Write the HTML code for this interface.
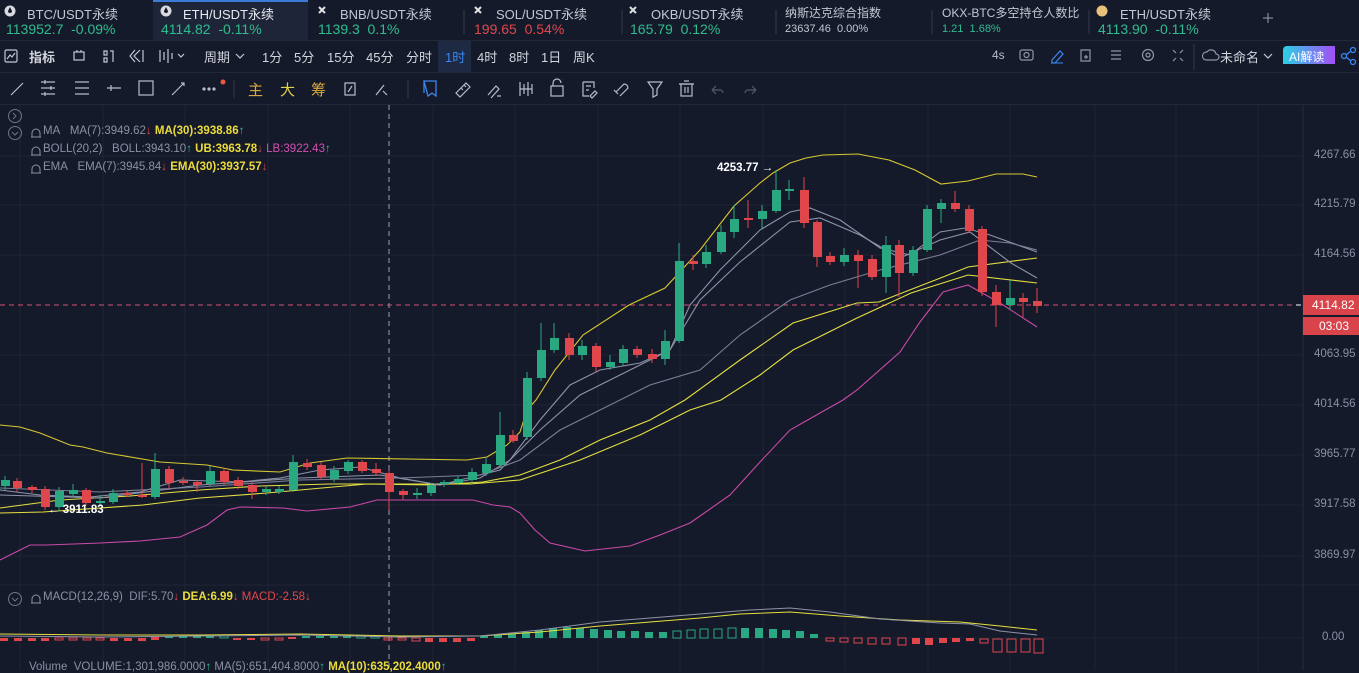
<!DOCTYPE html>
<html><head><meta charset="utf-8"><style>
*{margin:0;padding:0;box-sizing:border-box}
body{width:1359px;height:670px;background:#151a2b;overflow:hidden;font-family:"Liberation Sans","Noto Sans CJK SC",sans-serif;color:#c7cad4;position:relative}
.a{position:absolute;white-space:nowrap}
.tn{font-size:13px;color:#c4c7d1;top:4px}
.tp{font-size:14px;color:#2ebd8e;top:21px}
.tb{font-size:13px;color:#d3d5dc;top:47px}
.g{color:#2ebd8e}.r{color:#e0474c}.y{color:#ecdc3a}.m{color:#d34fb0}
.lg{font-size:11.5px;color:#8b90a2}
.ax{font-size:11.5px;color:#8b90a2;left:1314px}
</style></head><body>
<div class="a" style="left:153px;top:0;width:155px;height:40px;background:#1f2538;border-top:2px solid #3a7bd5"></div>
<div class="a" style="left:0;top:40px;width:1359px;height:1px;background:#232839"></div>
<div class="a" style="left:0;top:72px;width:1359px;height:1px;background:#232839"></div>
<div class="a" style="left:0;top:104px;width:1359px;height:1px;background:#232839"></div>
<svg class="a" style="left:0;top:0" width="1359" height="104">
<g fill="#d8dae0"><circle cx="10" cy="11" r="5.5"/><circle cx="166" cy="11" r="5.5"/></g>
<g fill="#151a2b"><path d="M10 7 l-2 4 a2 2 0 0 0 4 0z"/><path d="M166 7 l-2 4 a2 2 0 0 0 4 0z"/></g>
<g stroke="#e0e0e0" stroke-width="2"><path d="M319 7l6 6M325 7l-6 6M475 7l6 6M481 7l-6 6M630 7l6 6M636 7l-6 6"/></g>
<circle cx="1102" cy="11" r="5.5" fill="#e8c27a"/>
<g stroke="#333a4e"><path d="M464 10v24M622 10v24M776 10v24M932 10v24M1089 10v24"/></g>
<path d="M1268 13v10M1263 18h10" stroke="#9aa0b0"/>
<g stroke="#c4c7d1" fill="none" stroke-width="1.2">
<rect x="5" y="50" width="12" height="12" rx="1.5"/><path d="M7 59l3-4 2 2 3-4"/>
<rect x="74" y="52" width="10" height="8"/><path d="M77 50v2M81 50v2"/>
<path d="M104 51h3v4h-3zM104 58h3v4h-3zM110 51h3v11"/>
<path d="M140 50l-6 6 6 6M135 50l-5 6 5 6M143 50v12"/>
<path d="M160 50v12M164 52v8M168 49v14M172 53v6M178 54l3 3 3-3"/>
<path d="M236 54l4 4 4-4"/>
<path d="M1264 54l4 4 4-4"/>
</g>
<rect x="438" y="41" width="33" height="31" fill="#1e2a44"/>
<g stroke="#8f95a6" fill="none" stroke-width="1.2">
<rect x="1020" y="50" width="13" height="10" rx="2"/><circle cx="1026.5" cy="55" r="2.5"/>
<path d="M1081 50h9v11h-9zM1084 57h4M1086 55v4"/>
<path d="M1111 51h10M1111 55h10M1111 59h10"/>
<circle cx="1148" cy="55" r="5.5"/><circle cx="1148" cy="55" r="2"/>
<path d="M1173 50l3 3M1183 50l-3 3M1173 61l3-3M1183 61l-3-3"/>
<path d="M1206 60a4 4 0 0 1 1-8a5 5 0 0 1 9 2a3 3 0 0 1 0 6z"/>
</g>
<path d="M1052 60l8-9 3 3-8 9h-3z" stroke="#3a86f0" fill="none" stroke-width="1.2"/>
<path d="M1051 63h12" stroke="#3a86f0"/>
<path d="M1194 44v26" stroke="#333a4e"/>
<defs><linearGradient id="ai" x1="0" x2="1"><stop offset="0" stop-color="#2ad0e6"/><stop offset="1" stop-color="#a44ef5"/></linearGradient></defs>
<path d="M1287 46h48v18h-52v-14a4 4 0 0 1 4-4z" fill="url(#ai)"/>
<g stroke="#3a86f0" fill="none" stroke-width="1.3"><circle cx="1344" cy="56" r="2.5"/><circle cx="1353" cy="50" r="2.5"/><circle cx="1353" cy="62" r="2.5"/><path d="M1346 55l5-4M1346 57l5 4"/></g>
<g stroke="#b8bcc8" fill="none" stroke-width="1.2">
<path d="M11 95l12-12"/>
<path d="M41 82h14M41 88h14M41 94h14M45 80v4M51 86v4M45 92v4"/>
<path d="M75 82h14M75 88h14M75 94h14"/>
<path d="M107 88h14M111 85v6"/>
<rect x="139" y="81" width="14" height="14"/>
<path d="M172 95l12-12M181 83h3v3"/>
<circle cx="204" cy="89" r="1" fill="#b8bcc8"/><circle cx="209" cy="89" r="1" fill="#b8bcc8"/><circle cx="214" cy="89" r="1" fill="#b8bcc8"/>
<path d="M345 83h10v12h-10zM348 92l4-6"/>
<path d="M376 95l8-10M383 91l4 4"/>
</g>
<circle cx="223" cy="82" r="2.5" fill="#ef5a3c"/>
<path d="M234 80v18M408 80v18" stroke="#333a4e"/>
<g stroke="#3a86f0" fill="none" stroke-width="1.3"><path d="M424 81h12v15l-4-3-4 3zM424 81v12"/></g>
<g stroke="#b8bcc8" fill="none" stroke-width="1.2">
<path d="M456 93l10-10 4 4-10 10zM461 88l2 2M464 85l2 2"/>
<path d="M488 95l8-9 3 3-8 9M497 96h4"/>
<path d="M520 82v14M524 84v10M528 82v14M532 84v10M520 89h12"/>
<rect x="551" y="86" width="12" height="10"/><path d="M553 86v-3a4 4 0 0 1 8 0"/>
<path d="M583 82h11v6M583 82v14h6M586 86h5M586 90h3M590 96l5-5 2 2-5 5z"/>
<path d="M616 92l8-8a4 4 0 0 1 4 4l-8 8M614 90l4 4"/>
<path d="M648 82h14l-5 7v6l-4 2v-8z"/>
<rect x="681" y="84" width="11" height="12"/><path d="M679 84h15M684 81h5M685 87v6M688 87v6"/>
</g>
<g stroke="#545a6c" fill="none" stroke-width="1.2"><path d="M712 90l4-4M712 90l4 4M712 90h8a3 3 0 0 1 3 3M756 90l-4-4M756 90l-4 4M756 90h-8a3 3 0 0 0-3 3"/></g>
</svg>
<div class="a tn" style="left:27px">BTC/USDT永续</div><div class="a tp" style="left:6px">113952.7&nbsp; -0.09%</div>
<div class="a tn" style="left:183px;color:#e6e8ee">ETH/USDT永续</div><div class="a tp" style="left:161px">4114.82&nbsp; -0.11%</div>
<div class="a tn" style="left:340px">BNB/USDT永续</div><div class="a tp" style="left:318px">1139.3&nbsp; 0.1%</div>
<div class="a tn" style="left:496px">SOL/USDT永续</div><div class="a tp r" style="left:474px">199.65&nbsp; 0.54%</div>
<div class="a tn" style="left:651px">OKB/USDT永续</div><div class="a tp" style="left:630px">165.79&nbsp; 0.12%</div>
<div class="a" style="left:785px;top:4px;font-size:12px;color:#c4c7d1">纳斯达克综合指数</div><div class="a" style="left:785px;top:23px;font-size:11px;color:#c4c7d1">23637.46&nbsp; 0.00%</div>
<div class="a" style="left:942px;top:4px;font-size:12px;color:#c4c7d1">OKX-BTC多空持仓人数比</div><div class="a" style="left:942px;top:23px;font-size:11px;color:#2ebd8e">1.21&nbsp; 1.68%</div>
<div class="a tn" style="left:1120px">ETH/USDT永续</div><div class="a tp" style="left:1098px">4113.90&nbsp; -0.11%</div>
<div class="a tb" style="left:29px;font-weight:bold">指标</div>
<div class="a tb" style="left:204px">周期</div>
<div class="a tb" style="left:262px">1分</div><div class="a tb" style="left:294px">5分</div><div class="a tb" style="left:327px">15分</div><div class="a tb" style="left:366px">45分</div><div class="a tb" style="left:406px">分时</div><div class="a tb" style="left:445px;color:#3a86f0">1时</div><div class="a tb" style="left:477px">4时</div><div class="a tb" style="left:509px">8时</div><div class="a tb" style="left:541px">1日</div><div class="a tb" style="left:573px">周K</div>
<div class="a tb" style="left:992px;color:#b8bcc8;font-size:12px;top:48px">4s</div>
<div class="a tb" style="left:1220px">未命名</div>
<div class="a" style="left:1289px;top:48px;font-size:12px;color:#fff">AI解读</div>
<div class="a" style="left:248px;top:79px;font-size:15px;color:#d9a83a">主</div>
<div class="a" style="left:280px;top:79px;font-size:15px;color:#e0d04a">大</div>
<div class="a" style="left:311px;top:79px;font-size:15px;color:#d9a83a">筹</div>
<svg class="a" style="left:0;top:105px" width="1359" height="565" viewBox="0 105 1359 565">
<g stroke="#1f2436" stroke-width="1">
<path d="M20 105v565M103 105v565M185 105v565M268 105v565M350 105v565M433 105v565M515 105v565M598 105v565M680 105v565M763 105v565M845 105v565M928 105v565M1010 105v565M1095 105v565M1176 105v565M1258 105v565"/>
<path d="M0 156h1303M0 205h1303M0 255h1303M0 355h1303M0 405h1303M0 455h1303M0 505h1303M0 556h1303M0 585h1359M0 638h1303"/>
</g>
<path d="M1303 105v565" stroke="#262b3c"/>
<path d="M389 105v565" stroke="#9aa0b0" stroke-dasharray="5 4" stroke-width="1"/>
<path d="M0 305h1303" stroke="#d9507a" stroke-dasharray="5 4"/>
<g fill="none" stroke-width="1.1">
<polyline stroke="#d8c830" points="0,425 20,427 40,433 70,445 83,447 107,453 160,462 207,465 233,470 280,472 310,463 347,458 467,460 487,457 507,445 520,432 527,410 536,400 555,370 583,335 629,305 665,288 700,250 734,206 760,183 773,173 790,163 806,158 823,155 858,154 889,160 915,170 941,184 968,181 996,174 1023,174 1037,177"/>
<polyline stroke="#c94aa6" points="0,560 30,545 47,545 100,543 140,541 180,537 207,525 227,510 240,507 283,508 307,511 350,507 377,500 473,500 493,505 510,507 520,513 535,530 550,543 585,551 630,546 660,535 690,523 730,495 760,462 790,430 820,413 843,400 857,390 900,352 920,322 943,292 968,285 1000,303 1037,327"/>
<polyline stroke="#e5e040" points="0,513 43,512 143,505 200,498 267,493 333,487 367,484 433,485 483,482 520,475 560,460 600,440 650,420 685,400 740,360 793,323 857,303 879,302 943,277 968,267 1037,258"/>
<polyline stroke="#e5e040" points="0,508 60,500 130,496 200,490 260,486 330,484 400,484 470,484 520,480 580,460 640,435 690,410 721,400 760,375 793,350 857,318 911,293 968,275 1037,283"/>
<polyline stroke="#8e93a8" points="0,490 40,495 90,497 140,492 180,480 240,482 280,478 320,470 360,467 400,478 440,485 480,478 510,460 540,420 570,385 600,370 640,363 670,350 690,305 720,270 760,230 790,212 810,208 840,220 880,248 910,255 940,232 965,228 990,235 1037,252"/>
<polyline stroke="#8e93a8" points="0,495 100,498 200,485 300,478 380,475 440,485 500,470 540,430 580,395 620,375 670,350 700,300 740,262 790,222 820,218 860,235 900,258 940,240 970,232 1011,263 1037,278"/>
<polyline stroke="#7a7f94" points="0,488 100,492 200,487 300,480 400,478 480,475 520,460 560,430 600,410 650,385 700,370 740,335 790,300 830,285 880,270 940,255 980,240 1010,243 1037,250"/>
</g>
<g stroke="#2aa882" stroke-width="1">
<path d="M5 476v14M59 487v24M73 484v13M100 495v11M113 489v15M155 453v46M210 466v20M266 486v9M279 486v8M293 455v37M334 466v16M348 460v14M417 488v11M431 483v13M444 480v7M458 476v9M472 468v15M486 458v18M500 412v55M527 372v68M541 323v58M554 323v30M582 340v20M610 355v15M623 345v21M665 330v35M679 243v100M706 245v23M721 225v29M734 205v33M762 205v23M776 170v43M789 180v20M844 248v18M886 236v57M913 246v30M927 205v47M941 199v24M1010 280v30"/>
</g>
<g fill="#2aa882">
<rect x="1" y="480" width="9" height="6"/><rect x="55" y="491" width="9" height="16"/><rect x="69" y="490" width="9" height="4"/><rect x="96" y="501" width="9" height="2"/><rect x="109" y="493" width="9" height="9"/><rect x="151" y="469" width="9" height="28"/><rect x="206" y="471" width="9" height="13"/><rect x="262" y="489" width="9" height="3"/><rect x="275" y="489" width="9" height="3"/><rect x="289" y="462" width="9" height="28"/><rect x="330" y="470" width="9" height="9"/><rect x="344" y="462" width="9" height="9"/><rect x="413" y="493" width="9" height="2"/><rect x="427" y="485" width="9" height="8"/><rect x="440" y="482" width="9" height="2"/><rect x="454" y="479" width="9" height="4"/><rect x="468" y="472" width="9" height="8"/><rect x="482" y="464" width="9" height="9"/><rect x="496" y="435" width="9" height="30"/><rect x="523" y="378" width="9" height="59"/><rect x="537" y="350" width="9" height="28"/><rect x="550" y="338" width="9" height="12"/><rect x="578" y="346" width="9" height="9"/><rect x="606" y="362" width="9" height="5"/><rect x="619" y="349" width="9" height="14"/><rect x="661" y="341" width="9" height="18"/><rect x="675" y="261" width="9" height="80"/><rect x="702" y="252" width="9" height="12"/><rect x="717" y="232" width="9" height="20"/><rect x="730" y="219" width="9" height="13"/><rect x="758" y="211" width="9" height="8"/><rect x="772" y="190" width="9" height="21"/><rect x="785" y="189" width="9" height="2"/><rect x="840" y="255" width="9" height="7"/><rect x="882" y="245" width="9" height="32"/><rect x="909" y="250" width="9" height="23"/><rect x="923" y="209" width="9" height="41"/><rect x="937" y="203" width="9" height="6"/><rect x="1006" y="298" width="9" height="7"/>
</g>
<g stroke="#e0474c" stroke-width="1">
<path d="M17 478v14M32 485v8M45 486v24M86 488v18M127 490v7M142 463v35M169 466v24M183 477v8M197 480v12M224 468v17M238 477v12M252 482v17M307 459v11M321 462v18M362 460v13M376 463v13M389 470v40M403 489v11M513 430v13M569 333v27M596 343v29M637 346v12M652 349v14M693 255v15M748 200v28M804 177v51M817 220v47M830 252v13M858 250v38M872 255v25M899 240v57M955 191v21M969 205v28M982 226v70M996 285v42M1023 293v24M1037 288v25"/>
</g>
<g fill="#e0474c">
<rect x="13" y="481" width="9" height="7"/><rect x="28" y="487" width="9" height="3"/><rect x="41" y="489" width="9" height="18"/><rect x="82" y="490" width="9" height="13"/><rect x="123" y="493" width="9" height="2"/><rect x="138" y="495" width="9" height="2"/><rect x="165" y="469" width="9" height="14"/><rect x="179" y="481" width="9" height="2"/><rect x="193" y="482" width="9" height="3"/><rect x="220" y="471" width="9" height="11"/><rect x="234" y="480" width="9" height="6"/><rect x="248" y="485" width="9" height="7"/><rect x="303" y="463" width="9" height="4"/><rect x="317" y="465" width="9" height="12"/><rect x="358" y="462" width="9" height="9"/><rect x="372" y="469" width="9" height="4"/><rect x="385" y="473" width="9" height="19"/><rect x="399" y="491" width="9" height="4"/><rect x="509" y="435" width="9" height="6"/><rect x="565" y="338" width="9" height="17"/><rect x="592" y="346" width="9" height="21"/><rect x="633" y="349" width="9" height="6"/><rect x="648" y="354" width="9" height="5"/><rect x="689" y="261" width="9" height="3"/><rect x="744" y="218" width="9" height="2"/><rect x="800" y="190" width="9" height="33"/><rect x="813" y="222" width="9" height="35"/><rect x="826" y="256" width="9" height="6"/><rect x="854" y="255" width="9" height="6"/><rect x="868" y="259" width="9" height="18"/><rect x="895" y="245" width="9" height="28"/><rect x="951" y="203" width="9" height="6"/><rect x="965" y="209" width="9" height="22"/><rect x="978" y="229" width="9" height="63"/><rect x="992" y="292" width="9" height="13"/><rect x="1019" y="298" width="9" height="4"/><rect x="1033" y="301" width="9" height="5"/>
</g>
<g fill="#e0474c"><rect x="0" y="638" width="8" height="3"/><rect x="14" y="638" width="8" height="3"/><rect x="28" y="638" width="8" height="3"/><rect x="41" y="638" width="8" height="3"/><rect x="110" y="638" width="8" height="3"/><rect x="124" y="638" width="8" height="3"/><rect x="138" y="638" width="8" height="3"/><rect x="151" y="637" width="8" height="3"/><rect x="233" y="638" width="8" height="2"/><rect x="247" y="638" width="8" height="2"/><rect x="288" y="637" width="8" height="2"/><rect x="425" y="638" width="8" height="4"/><rect x="439" y="638" width="8" height="4"/><rect x="453" y="638" width="8" height="4"/><rect x="467" y="638" width="8" height="3"/><rect x="912" y="638" width="8" height="6"/><rect x="925" y="638" width="8" height="7"/><rect x="939" y="638" width="8" height="5"/><rect x="952" y="638" width="8" height="4"/><rect x="966" y="638" width="8" height="3"/></g>
<g fill="none" stroke="#e0474c"><rect x="55" y="638" width="8" height="2"/><rect x="69" y="638" width="8" height="2"/><rect x="83" y="638" width="8" height="2"/><rect x="96" y="638" width="8" height="2"/><rect x="261" y="638" width="8" height="2"/><rect x="275" y="638" width="8" height="2"/><rect x="384" y="638" width="8" height="2"/><rect x="398" y="638" width="8" height="2"/><rect x="412" y="638" width="8" height="3"/><rect x="826" y="638" width="8" height="3"/><rect x="840" y="638" width="8" height="4"/><rect x="854" y="638" width="8" height="5"/><rect x="868" y="638" width="8" height="6"/><rect x="882" y="638" width="8" height="6"/><rect x="898" y="638" width="8" height="7"/><rect x="980" y="639" width="8" height="4"/><rect x="993" y="639" width="9" height="13"/><rect x="1007" y="639" width="9" height="13"/><rect x="1021" y="639" width="9" height="13"/><rect x="1034" y="639" width="9" height="14"/></g>
<g fill="#2aa882"><rect x="165" y="636" width="8" height="2"/><rect x="179" y="636" width="8" height="2"/><rect x="193" y="636" width="8" height="2"/><rect x="206" y="636" width="8" height="2"/><rect x="302" y="636" width="8" height="2"/><rect x="316" y="636" width="8" height="2"/><rect x="330" y="636" width="8" height="2"/><rect x="343" y="636" width="8" height="2"/><rect x="480" y="636" width="8" height="2"/><rect x="494" y="635" width="8" height="3"/><rect x="508" y="634" width="8" height="4"/><rect x="522" y="632" width="8" height="6"/><rect x="535" y="630" width="8" height="8"/><rect x="549" y="628" width="8" height="10"/><rect x="563" y="627" width="8" height="11"/><rect x="576" y="628" width="8" height="10"/><rect x="590" y="629" width="8" height="9"/><rect x="604" y="630" width="8" height="8"/><rect x="617" y="631" width="8" height="7"/><rect x="631" y="631" width="8" height="7"/><rect x="645" y="632" width="8" height="6"/><rect x="659" y="632" width="8" height="6"/><rect x="741" y="628" width="8" height="10"/><rect x="755" y="628" width="8" height="10"/><rect x="769" y="629" width="8" height="9"/><rect x="782" y="630" width="8" height="8"/><rect x="796" y="631" width="8" height="7"/><rect x="810" y="634" width="8" height="4"/></g>
<g fill="none" stroke="#2aa882"><rect x="673" y="631" width="8" height="7"/><rect x="687" y="630" width="8" height="8"/><rect x="700" y="629" width="8" height="9"/><rect x="714" y="629" width="8" height="9"/><rect x="728" y="628" width="8" height="10"/><rect x="220" y="636" width="8" height="2"/><rect x="357" y="636" width="8" height="2"/><rect x="371" y="636" width="8" height="2"/></g>
<polyline fill="none" stroke="#e5e040" points="0,634 100,635 200,635 300,634 400,636 480,636 540,632 600,626 650,622 700,618 740,614 790,612 840,616 900,620 960,622 1000,626 1037,630"/>
<polyline fill="none" stroke="#8e93a8" points="0,636 100,637 200,636 300,635 400,637 480,636 540,630 600,622 650,618 700,614 750,610 790,608 830,612 880,619 940,623 970,624 1000,631 1037,635"/>
<rect x="1303" y="295" width="56" height="20" fill="#d9434a"/>
<rect x="1303" y="317" width="56" height="18" fill="#d9434a"/>
<path d="M1296 305h5" stroke="#fff"/>
<circle cx="15" cy="116" r="6.5" fill="none" stroke="#6e7386"/><path d="M13 113l3 3-3 3" fill="none" stroke="#6e7386"/>
<circle cx="15" cy="133" r="6.5" fill="none" stroke="#6e7386"/><path d="M12 132l3 3 3-3" fill="none" stroke="#6e7386"/>
<circle cx="15" cy="599" r="6.5" fill="none" stroke="#6e7386"/><path d="M12 598l3 3 3-3" fill="none" stroke="#6e7386"/>
<g fill="none" stroke="#8b90a2"><path d="M32 137v-4a4 4 0 0 1 8 0v4h-9h10M32 155v-4a4 4 0 0 1 8 0v4h-9h10M32 173v-4a4 4 0 0 1 8 0v4h-9h10M32 603v-4a4 4 0 0 1 8 0v4h-9h10"/></g>
</svg>
<div class="a lg" style="left:43px;top:125px">MA&nbsp;&nbsp; MA(7):3949.62<span class="r">↓</span> <b class="y">MA(30):3938.86</b><span class="g">↑</span></div>
<div class="a lg" style="left:43px;top:143px">BOLL(20,2)&nbsp;&nbsp; BOLL:3943.10<span class="g">↑</span> <b class="y">UB:3963.78</b><span class="r">↓</span> <span class="m">LB:3922.43</span><span class="g">↑</span></div>
<div class="a lg" style="left:43px;top:161px">EMA&nbsp;&nbsp; EMA(7):3945.84<span class="r">↓</span> <b class="y">EMA(30):3937.57</b><span class="r">↓</span></div>
<div class="a lg" style="left:43px;top:591px">MACD(12,26,9)&nbsp; DIF:5.70<span class="r">↓</span> <b class="y">DEA:6.99</b><span class="r">↓</span> <span class="r">MACD:-2.58↓</span></div>
<div class="a lg" style="left:29px;top:661px">Volume&nbsp; VOLUME:1,301,986.0000<span class="g">↑</span> MA(5):651,404.8000<span class="g">↑</span> <b class="y">MA(10):635,202.4000</b><span class="g">↑</span></div>
<div class="a" style="left:717px;top:162px;font-size:11.5px;color:#fff;font-weight:bold">4253.77 →</div>
<div class="a" style="left:48px;top:504px;font-size:11.5px;color:#fff;font-weight:bold">← 3911.83</div>
<div class="a ax" style="top:149px">4267.66</div>
<div class="a ax" style="top:198px">4215.79</div>
<div class="a ax" style="top:248px">4164.56</div>
<div class="a ax" style="top:348px">4063.95</div>
<div class="a ax" style="top:398px">4014.56</div>
<div class="a ax" style="top:448px">3965.77</div>
<div class="a ax" style="top:498px">3917.58</div>
<div class="a ax" style="top:549px">3869.97</div>
<div class="a ax" style="top:631px;left:1322px">0.00</div>
<div class="a" style="left:1312px;top:298px;font-size:12px;color:#fff">4114.82</div>
<div class="a" style="left:1319px;top:319px;font-size:12px;color:#fff">03:03</div>
</body></html>
